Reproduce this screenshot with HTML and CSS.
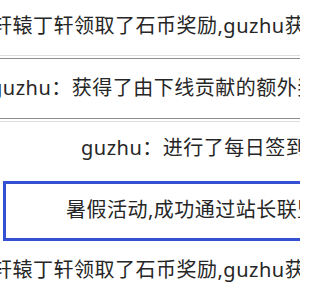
FILE: index.html
```html
<!DOCTYPE html>
<html lang="zh-CN">
<head>
<meta charset="utf-8">
<title>动态</title>
<link rel="stylesheet" href="styles.css">
</head>
<body>
<ul class="feed">
  <li class="row row-a">轩辕丁轩领取了石币奖励,guzhu获得了由下线贡献的额外奖励</li>
  <li class="row row-b is-hover">guzhu：获得了由下线贡献的额外奖励</li>
  <li class="row row-c">guzhu：进行了每日签到</li>
  <li class="row row-d is-active">暑假活动,成功通过站长联盟审核</li>
  <li class="row row-e">轩辕丁轩领取了石币奖励,guzhu获得了由下线贡献的额外奖励</li>
</ul>
</body>
</html>
```
FILE: styles.css
```css
html, body {
  margin: 0;
  padding: 0;
  background: #fff;
}
body {
  width: 300px;
  height: 300px;
  overflow: hidden;
}
.feed {
  list-style: none;
  margin: 0;
  padding: 0;
  font-family: "Noto Sans", "Noto Sans CJK SC", sans-serif;
  font-size: 20px;
  line-height: 24px;
  letter-spacing: 0.5px;
  color: #262626;
}
.row {
  white-space: nowrap;
  overflow: hidden;
  margin: 0 -20px 0 0;
}
.row-a {
  padding: 14px 0 20px;
  text-indent: -8px;
}
.row-b {
  margin-left: -20px;
  padding: 17px 0 18px;
  border-top: 1px solid #8e8e8e;
  border-bottom: 1px solid #8e8e8e;
  outline: 1px solid #dedede;
  outline-offset: 2px;
  overflow: visible;
  text-indent: 10px;
}
.row-c {
  padding: 17px 0 21px;
  text-indent: 81px;
}
.row-d {
  margin-left: 3px;
  padding: 14px 0 16px;
  border: 3px solid #3451d1;
  border-right: 0;
  text-indent: 60px;
}
.row-e {
  padding: 17px 0 19px;
  text-indent: -8px;
}
```
